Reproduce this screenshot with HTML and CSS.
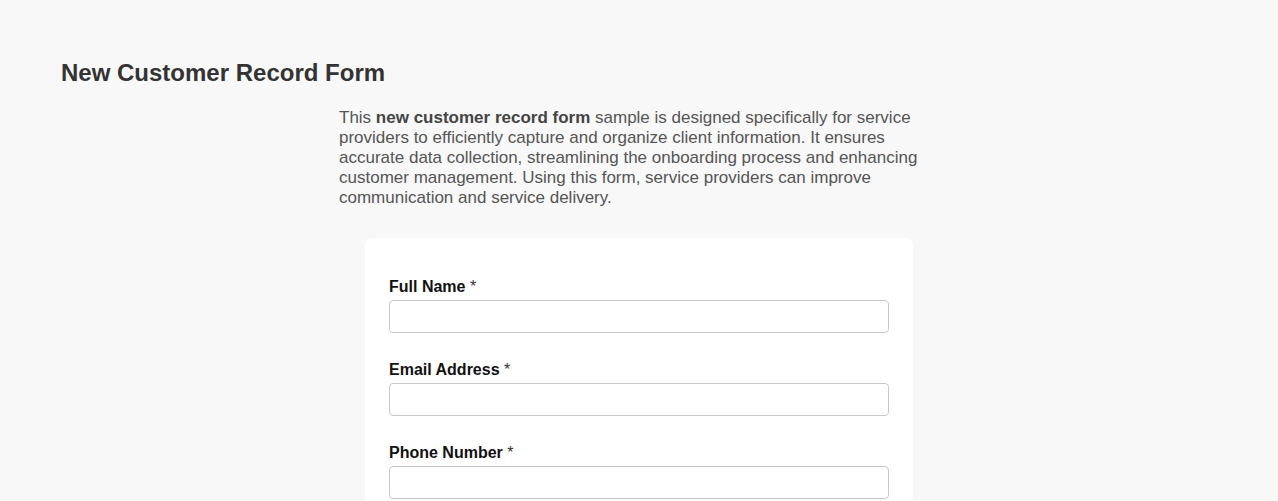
FILE: index.html
```html
<!DOCTYPE html>
<html lang="en">
<head>
<meta charset="utf-8">
<title>New Customer Record Form</title>
<link rel="stylesheet" href="styles.css">
</head>
<body>
<div class="page">
  <h1 class="title">New Customer Record Form</h1>
  <p class="intro">This <strong>new customer record form</strong> sample is designed specifically for service providers to efficiently capture and organize client information. It ensures accurate data collection, streamlining the onboarding process and enhancing customer management. Using this form, service providers can improve communication and service delivery.</p>
  <form class="card">
    <div class="field">
      <label class="label" for="name">Full Name <span class="req">*</span></label>
      <input class="input" id="name" type="text">
    </div>
    <div class="field">
      <label class="label" for="email">Email Address <span class="req">*</span></label>
      <input class="input" id="email" type="email">
    </div>
    <div class="field">
      <label class="label" for="phone">Phone Number <span class="req">*</span></label>
      <input class="input" id="phone" type="tel">
    </div>
  </form>
</div>
</body>
</html>
```
FILE: styles.css
```css
html, body {
  margin: 0;
  padding: 0;
  background: #f8f8f8;
  font-family: "Liberation Sans", Arial, sans-serif;
}
.page {
  padding: 59px 0 40px;
}
.title {
  margin: 0 0 21px 61px;
  font-size: 24px;
  line-height: 28px;
  font-weight: bold;
  color: #333;
}
.intro {
  max-width: 600px;
  margin: 0 auto 30px;
  font-size: 17px;
  line-height: 20px;
  color: #555;
}
.intro strong {
  color: #444;
}
.card {
  width: 548px;
  box-sizing: border-box;
  margin: 0 auto;
  background: #fff;
  border-radius: 7px;
  padding: 39px 24px 24px;
  box-shadow: 0 0 2px rgba(0,0,0,0.04);
}
.field {
  margin-bottom: 27px;
}
.label {
  display: block;
  font-size: 16px;
  line-height: 18px;
  font-weight: bold;
  color: #111;
  padding-top: 1px;
  margin-bottom: 4px;
}
.req {
  font-weight: normal;
  color: #333;
}
.input {
  display: block;
  width: 500px;
  height: 33px;
  box-sizing: border-box;
  border: 1px solid #c8c8c8;
  border-radius: 4px;
  background: #fff;
  padding: 0 8px;
  font-family: inherit;
  font-size: 15px;
}
```
